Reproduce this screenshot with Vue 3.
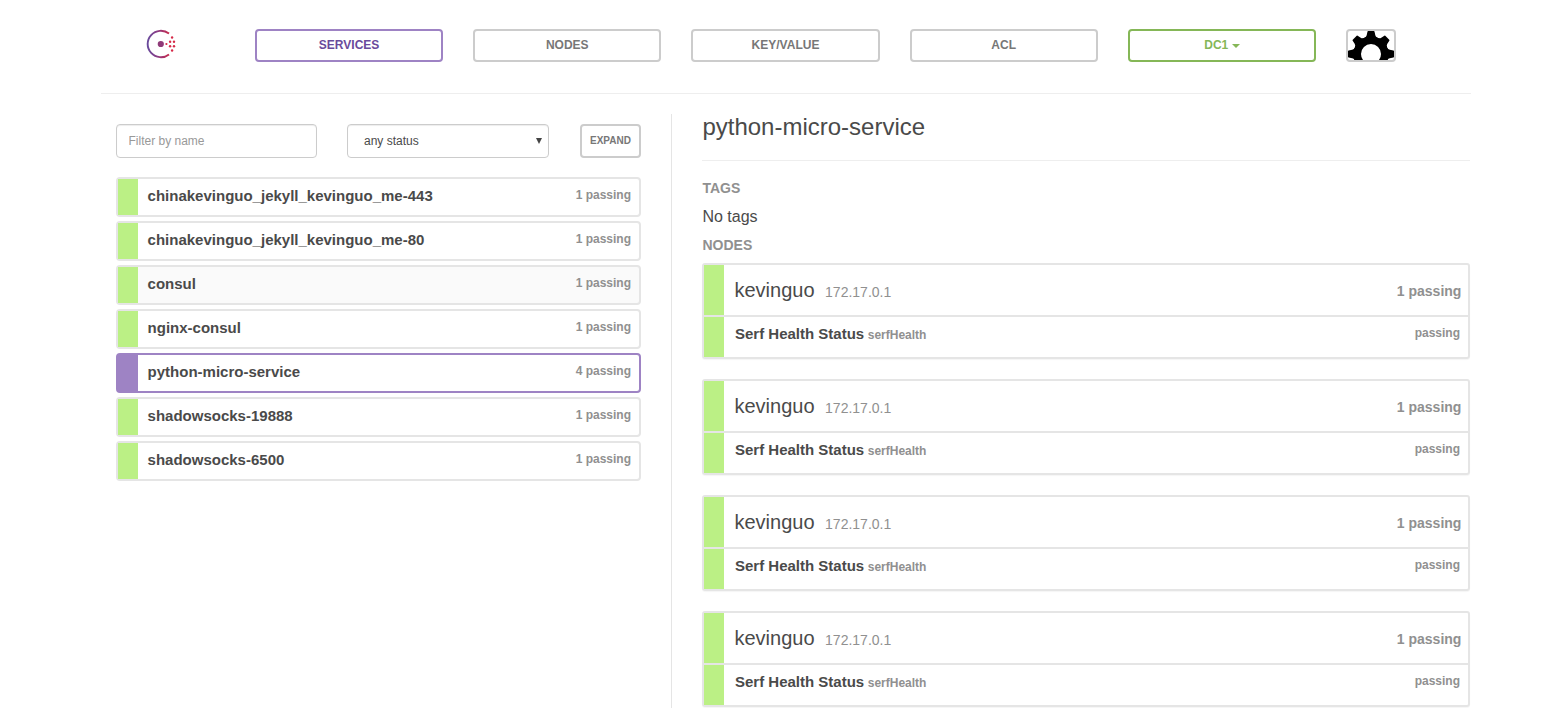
<script setup>
const tabs = [
  { label: 'SERVICES', active: true },
  { label: 'NODES' },
  { label: 'KEY/VALUE' },
  { label: 'ACL' }
]

const services = [
  { name: 'chinakevinguo_jekyll_kevinguo_me-443', status: '1 passing' },
  { name: 'chinakevinguo_jekyll_kevinguo_me-80', status: '1 passing' },
  { name: 'consul', status: '1 passing', hover: true },
  { name: 'nginx-consul', status: '1 passing' },
  { name: 'python-micro-service', status: '4 passing', active: true },
  { name: 'shadowsocks-19888', status: '1 passing' },
  { name: 'shadowsocks-6500', status: '1 passing' }
]

const nodes = [1, 2, 3, 4].map((id) => ({
  id,
  name: 'kevinguo',
  address: '172.17.0.1',
  summary: '1 passing',
  check: 'Serf Health Status',
  checkId: 'serfHealth',
  checkStatus: 'passing'
}))

const teeth = [0, 45, 90, 135, 180, 225, 270, 315]
</script>

<template>
  <div class="page">
    <header class="topbar">
      <svg class="logo" width="30" height="30" viewBox="0 0 30 30">
        <defs>
          <linearGradient id="ring" x1="0" y1="0" x2="1" y2="0">
            <stop offset="0" stop-color="#694a9c" />
            <stop offset="0.45" stop-color="#8a3c85" />
            <stop offset="1" stop-color="#c62a4c" />
          </linearGradient>
        </defs>
        <path d="M23 4.6 A13.2 13.2 0 1 0 23 25.4" fill="none" stroke="url(#ring)" stroke-width="1.9" />
        <circle cx="14.8" cy="15" r="3.1" fill="#8f3a78" />
        <g fill="#d62a48">
          <circle cx="20.4" cy="15" r="1.1" />
          <circle cx="24.1" cy="12.7" r="1.2" />
          <circle cx="24.1" cy="17.3" r="1.2" />
          <circle cx="28" cy="12.7" r="1.2" />
          <circle cx="28" cy="17.3" r="1.2" />
          <circle cx="26.1" cy="8.5" r="1.2" />
          <circle cx="26.1" cy="21.5" r="1.2" />
        </g>
      </svg>
      <nav class="tabs">
        <a v-for="t in tabs" :key="t.label" class="btn" :class="{ primary: t.active }">{{ t.label }}</a>
        <a class="btn success">DC1 <span class="caret"></span></a>
      </nav>
      <a class="gear">
        <svg width="46" height="46" viewBox="-23 -23 46 46">
          <path
            v-for="a in teeth"
            :key="a"
            :transform="`rotate(${a})`"
            d="M-7 -14 L-6.6 -16.2 Q-4.7 -16.9 -4.3 -18.8 L-3.5 -22.4 Q-3.4 -23 -2.8 -23 H2.8 Q3.4 -23 3.5 -22.4 L4.3 -18.8 Q4.7 -16.9 6.6 -16.2 L7 -14 Z"
          />
          <circle r="13.7" fill="none" stroke="#000" stroke-width="7.4" />
        </svg>
      </a>
    </header>

    <main class="columns">
      <section class="list">
        <div class="filters">
          <input class="field" type="text" placeholder="Filter by name" />
          <div class="field select"><span>any status</span><svg width="6" height="6" viewBox="0 0 6 6"><path d="M0 0H6L3 6Z" fill="#444" /></svg></div>
          <a class="expand">EXPAND</a>
        </div>
        <div v-for="s in services" :key="s.name" class="service" :class="{ active: s.active, hover: s.hover }">
          <span class="bar"></span>
          <span class="name">{{ s.name }}</span>
          <span class="small">{{ s.status }}</span>
        </div>
      </section>

      <section class="detail">
        <h2>python-micro-service</h2>
        <h5>TAGS</h5>
        <p>No tags</p>
        <h5>NODES</h5>
        <article v-for="n in nodes" :key="n.id" class="node">
          <div class="node-head">
            <span class="bar"></span>
            <span class="host">{{ n.name }}</span>
            <span class="ip">{{ n.address }}</span>
            <span class="summary">{{ n.summary }}</span>
          </div>
          <div class="node-check">
            <span class="bar"></span>
            <span class="name">{{ n.check }}</span>
            <span class="check-id">{{ n.checkId }}</span>
            <span class="small">{{ n.checkStatus }}</span>
          </div>
        </article>
      </section>
    </main>
  </div>
</template>

<style>
body {
  background: #fff;
}
</style>

<style scoped>
.page,
.page * {
  box-sizing: border-box;
}
.page {
  width: 1370px;
  height: 708px;
  margin-left: 101px;
  overflow: hidden;
  font-family: "Liberation Sans", Arial, sans-serif;
  color: #4a4a4a;
  white-space: nowrap;
}
.topbar {
  display: flex;
  align-items: flex-start;
  height: 94px;
  padding: 29px 75px 0 45px;
  border-bottom: 1px solid #eee;
}
.logo {
  margin-right: 79px;
}
.tabs {
  display: grid;
  grid-template-columns: repeat(5, 1fr);
  gap: 30px;
  width: 1061px;
}
.btn {
  height: 33px;
  border: 2px solid #ccc;
  border-radius: 4px;
  font-size: 12px;
  font-weight: 700;
  line-height: 28px;
  text-align: center;
  color: #777;
}
.btn.primary {
  color: #694a9c;
  border-color: #9e83c4;
}
.btn.success {
  color: #85b757;
  border-color: #85b757;
}
.caret {
  display: inline-block;
  border: 4px solid transparent;
  border-top-color: currentColor;
  border-bottom: 0;
  vertical-align: middle;
}
.gear {
  width: 50px;
  height: 33px;
  margin-left: 30px;
  border: 2px solid #ccc;
  border-radius: 4px;
  overflow: hidden;
}
.gear svg {
  display: block;
}
.columns {
  display: flex;
  height: 594px;
  margin-top: 20px;
}
.list {
  width: 571px;
  padding: 10px 30px 0 15px;
  border-right: 1px solid #e5e5e5;
}
.filters {
  display: flex;
  margin-bottom: 19px;
}
.field {
  width: 201px;
  height: 34px;
  margin-right: 30px;
  padding: 0 0 1px 11.5px;
  border: 1px solid #ccc;
  border-radius: 4px;
  box-shadow: inset 0 1px 1px rgba(0, 0, 0, 0.075);
  font: 12px "Liberation Sans", Arial, sans-serif;
}
.field::placeholder {
  color: #999;
  opacity: 1;
}
.select {
  display: flex;
  align-items: center;
  justify-content: space-between;
  width: 202px;
  margin-right: 31px;
  padding: 0 6px 1px 16px;
}
.expand {
  width: 61px;
  height: 34px;
  border: 2px solid #ccc;
  border-radius: 4px;
  font-size: 10px;
  font-weight: 700;
  line-height: 30px;
  text-align: center;
  color: #777;
}
.service {
  display: flex;
  height: 40px;
  margin-bottom: 4px;
  border: 2px solid #e5e5e5;
  border-radius: 4px;
  line-height: 34px;
}
.service.hover {
  background: #fafafa;
}
.bar {
  width: 20px;
  flex: none;
  background: #bbf085;
}
.service.active {
  border-color: #9e83c4;
}
.service.active .bar {
  background: #9e83c4;
}
.name {
  margin-left: 9.6px;
  font-size: 15px;
  font-weight: 700;
}
.small {
  margin-left: auto;
  padding-right: 8px;
  font-size: 12px;
  font-weight: 700;
  line-height: 32px;
  color: #909090;
}
.detail {
  width: 798px;
  padding-left: 30px;
}
h2 {
  height: 47px;
  margin: 0 0 17px;
  border-bottom: 1px solid #eee;
  font-size: 24px;
  font-weight: 400;
  line-height: 26px;
  text-indent: 0.4px;
}
h5 {
  height: 20px;
  margin: 0;
  font-size: 14px;
  font-weight: 700;
  line-height: 20px;
  color: #909090;
  text-indent: 0.5px;
}
p {
  height: 37px;
  margin: 0;
  font-size: 16px;
  line-height: 38px;
  text-indent: 0.4px;
}
h5 + .node {
  margin-top: 8px;
}
.node {
  height: 96px;
  margin-bottom: 20px;
  border: 2px solid #e5e5e5;
  border-radius: 3px;
  box-shadow: 0 1px 1px rgba(0, 0, 0, 0.04);
}
.node-head {
  display: flex;
  height: 52px;
  border-bottom: 2px solid #e5e5e5;
}
.host {
  margin-left: 10.5px;
  font-size: 20px;
  line-height: 50px;
}
.ip {
  margin-left: 10.5px;
  font-size: 14px;
  line-height: 54px;
  color: #909090;
}
.summary {
  margin-left: auto;
  padding-right: 6.6px;
  font-size: 14px;
  font-weight: 700;
  line-height: 52px;
  color: #909090;
}
.node-check {
  display: flex;
  height: 40px;
  line-height: 34px;
}
.node-check .name {
  margin-left: 11px;
}
.check-id {
  margin-left: 3.5px;
  font-size: 12px;
  font-weight: 700;
  line-height: 36px;
  color: #909090;
}
</style>
